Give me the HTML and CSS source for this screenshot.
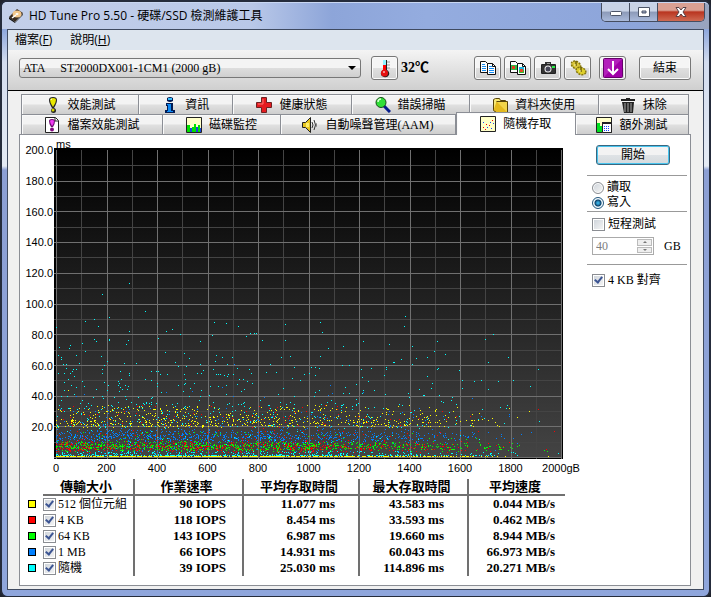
FILE: index.html
```html
<!DOCTYPE html>
<html lang="zh-Hant">
<head>
<meta charset="utf-8">
<title>HD Tune Pro 5.50</title>
<link rel="stylesheet" href="styles.css">
</head>
<body>
<div class="window">
  <header class="titlebar">
    <svg class="app-icon" width="16" height="16" viewBox="0 0 16 16"><path d="M1 9 9 1l6 4-8 9z" fill="#3a2c20"/><path d="M1 9v2l6 4v-1z" fill="#111"/><path d="M15 5v2l-8 8v-1z" fill="#555"/><ellipse cx="9" cy="6" rx="4.500" ry="3.500" fill="#f3c78b"/><ellipse cx="9" cy="6" rx="1.500" ry="1" fill="#fff"/><path d="M4 10l4-3" stroke="#fff" stroke-width="1.500"/></svg>
    <h1>HD Tune Pro 5.50 - 硬碟/SSD 檢測維護工具</h1>
    <div class="caption">
      <button aria-label="最小化"><svg width="12" height="12" viewBox="0 0 12 12"><rect x=".5" y="5.500" width="11" height="4" rx="1" fill="#fff" stroke="#4c5568"/></svg></button>
      <button aria-label="最大化"><svg width="12" height="12" viewBox="0 0 12 12"><path d="M.5 1.500h11v9H.5zM4 5v2h4V5z" fill="#fff" fill-rule="evenodd" stroke="#4c5568"/></svg></button>
      <button class="close" aria-label="關閉"><svg width="12" height="12" viewBox="0 0 12 12"><path d="M1 1.500h3l2 2.500 2-2.500h3L8 6l3 4.500H8L6 8l-2 2.500H1L4 6z" fill="#fff" stroke="#5a4044"/></svg></button>
    </div>
  </header>
  <div class="client">
    <nav class="menu"><a href="#file">檔案(<u>F</u>)</a><a href="#help">說明(<u>H</u>)</a></nav>
    <div class="toolbar">
      <div class="drive">
        <select aria-label="磁碟機"><option>ATA&nbsp;&nbsp;&nbsp;&nbsp; ST2000DX001-1CM1 (2000 gB)</option></select>
      </div>
      <button class="tool" aria-label="溫度"><svg width="20" height="20" viewBox="0 0 20 20"><path d="M8 2h4v10q3 2 2 5-2 3-5 2-4-1-3-5l2-2z" fill="#222"/><path d="M8 2h3v5H8z" fill="#8ef3ff"/><path d="M8 7h3v6H8z" fill="#f00"/><circle cx="9.500" cy="15" r="3.500" fill="#e81010"/><path d="M8 14h2" stroke="#fff"/><path d="M12 4h3M12 7h3M12 10h3" stroke="#999"/></svg></button>
      <strong class="temp">32℃</strong>
      <div class="tools">
        <button class="tool" aria-label="複製文字"><svg width="18" height="18" viewBox="0 0 18 18"><path d="M1.500 2.500h5l2 2v9h-7z" fill="#fff" stroke="#111"/><path d="M8.500 4.500h5l3 3v8h-8z" fill="#fff" stroke="#111"/><path d="M13.500 4.500v3h3" fill="none" stroke="#111"/><path d="M3 5.500h3M3 7.500h4M3 9.500h4M3 11.500h4M10 7.500h3M10 9.500h5M10 11.500h5M10 13.500h5" stroke="#168df3"/></svg></button>
        <button class="tool" aria-label="複製畫面"><svg width="18" height="18" viewBox="0 0 18 18"><path d="M1.500 2.500h5l2 2v9h-7z" fill="#fff" stroke="#111"/><path d="M2 6h6v5H2z" fill="#2cba46"/><path d="M3 7h3v3H3z" fill="#e33c22"/><path d="M8.500 4.500h5l3 3v8h-8z" fill="#fff" stroke="#111"/><path d="M13.500 4.500v3h3" fill="none" stroke="#111"/><path d="M10 8h5v6h-5z" fill="#20b8df"/><path d="M10 11h5v3h-5z" fill="#34bc34"/><path d="M11 10h3v3h-3z" fill="#e44a22"/></svg></button>
        <button class="tool" aria-label="儲存畫面"><svg width="18" height="18" viewBox="0 0 18 18"><path d="M6 3h6v3H6z" fill="#333"/><path d="M8 4h3v1H8z" fill="#999"/><rect x="2" y="5" width="15" height="10" rx="1" fill="#222"/><rect x="3" y="6" width="13" height="8" fill="#333"/><circle cx="9" cy="10" r="3.500" fill="#eee"/><circle cx="9" cy="10" r="2.500" fill="#445"/><rect x="13" y="7" width="3" height="2" fill="#2bed46"/></svg></button>
        <button class="tool" aria-label="選項"><svg width="18" height="18" viewBox="0 0 18 18"><ellipse cx="7" cy="6" rx="5" ry="3.500" transform="rotate(30 7 6)" fill="#d9c63a" stroke="#85760d" stroke-width="1.500" stroke-dasharray="2 1"/><ellipse cx="12" cy="12" rx="5" ry="3.500" transform="rotate(20 12 12)" fill="#dfd02c" stroke="#85760d" stroke-width="1.500" stroke-dasharray="2 1"/><path d="M7 2v5M12 8v5" stroke="#6f6208" stroke-width="1.500"/><path d="M5 6h2M10 12h2" stroke="#fff9aa"/></svg></button>
        <button class="tool download" aria-label="下載"><svg width="20" height="20" viewBox="0 0 20 20"><rect x=".5" y=".5" width="19" height="19" rx="1" fill="#a000a8" stroke="#65006b"/><path d="M1 1h18L1 19z" fill="#c035c8" opacity=".6"/><path d="M10 3v13M5 11l5 5 5-5" fill="none" stroke="#fff" stroke-width="2"/></svg></button>
      </div>
      <button class="tool exit">結束</button>
    </div>
    <main class="content">
      <div class="tabs upper" role="tablist">
        <button role="tab" class="w117"><svg width="16" height="16" viewBox="0 0 16 16"><path d="M4 3q0-3 4-3t4 3q0 3-3 8H7Q4 6 4 3z" fill="#222"/><path d="M5 3q0-2 3-2t3 2q0 3-3 7Q5 6 5 3z" fill="#e9e800"/><path d="M6 3q0-1 1-1" stroke="#fff" fill="none"/><circle cx="8.500" cy="13.500" r="2.500" fill="#222"/><circle cx="8" cy="13" r="1.500" fill="#d7d500"/></svg>效能測試</button>
        <button role="tab" class="w94"><svg width="16" height="16" viewBox="0 0 16 16"><path d="M5 1q3-2 6 0v3q-3 2-6 0zM4 6h7v7h2v3H3v-3h2V9H4z" fill="#001b54"/><path d="M6 1h4v2H6z" fill="#37bcfb"/><path d="M5 7h4v7h2v1H5v-1h1V8H5z" fill="#108af3"/></svg>資訊</button>
        <button role="tab" class="w118"><svg width="16" height="16" viewBox="0 0 16 16"><path d="M5.500.500h5v5h5v5h-5v5h-5v-5h-5v-5h5z" fill="#e51b20" stroke="#6e2222"/><path d="M7 2v5H2" fill="none" stroke="#ff7771"/></svg>健康狀態</button>
        <button role="tab" class="w118"><svg width="16" height="16" viewBox="0 0 16 16"><path d="m9 9 6 6" stroke="#061b8c" stroke-width="3"/><circle cx="6" cy="5.500" r="5" fill="#30df37" stroke="#164a16"/><path d="M3 5q0-3 3-3" fill="none" stroke="#d8ffd2" stroke-width="1.500"/></svg>錯誤掃瞄</button>
        <button role="tab" class="w129"><svg width="16" height="16" viewBox="0 0 16 16"><path d="M1.500 13.500v-11l2-1h4l1 2h5v2" fill="#f7e875" stroke="#554209"/><path d="M4.500 4.500h11v11h-11l-3-2" fill="#e4b91e" stroke="#554209"/><path d="m5 5 10 10V5z" fill="#f2d54a"/></svg>資料夾使用</button>
        <button role="tab" class="w90"><svg width="16" height="16" viewBox="0 0 16 16"><path d="M1 2h5V1h4v1h5v2H1z" fill="#222"/><path d="M2 5h12l-1 11H4z" fill="#222"/><path d="M5 6v9M8 6v9M11 6v9" stroke="#aaa"/></svg>抹除</button>
      </div>
      <div class="tabs lower" role="tablist">
        <button role="tab" class="w141"><svg width="16" height="16" viewBox="0 0 16 16"><path d="M1.500.500h10l3 3v12h-13z" fill="#fff" stroke="#222"/><path d="M11 1v3h3" fill="none" stroke="#222"/><path d="M5 4q0-2 3-2t3 2q0 3-2 6H7Q5 7 5 4z" fill="#6e0a70"/><path d="M6 4q0-1 2-1t2 1q0 3-2 5Q6 6 6 4z" fill="#f03bf2"/><circle cx="8" cy="12.500" r="2" fill="#82087f"/></svg>檔案效能測試</button>
        <button role="tab" class="w118"><svg width="16" height="16" viewBox="0 0 16 16"><path d="M.5.500h15v15H.5z" fill="#ffffc8" stroke="#222"/><path d="M1 8h3v7H1zM6 10h2v5H6zM8 7h2v8H8zM12 8h2v7h-2z" fill="#00e000"/><path d="M4 11h2v4H4zM10 10h2v5h-2zM14 11h1v4h-1z" fill="#1746dd"/></svg>磁碟監控</button>
        <button role="tab" class="w175"><svg width="16" height="16" viewBox="0 0 16 16"><path d="M.5 5.500h3l5-5v15l-5-5h-3z" fill="#e7c520" stroke="#222"/><path d="M4 6h3v4H4z" fill="#fff06b"/><path d="M10 5q2 3 0 6M12 3q3 5 0 10" fill="none" stroke="#333"/><path d="M14 6q1 2 0 4" fill="none" stroke="#777"/></svg>自動噪聲管理(AAM)</button>
        <button role="tab" class="w119 active" aria-selected="true"><svg width="16" height="16" viewBox="0 0 16 16"><path d="M.5.500h15v15H.5z" fill="#ffffc8" stroke="#222"/><path d="M3 11h1v1H3zM6 8h1v1H6zM9 9h1v1H9zM12 4h1v1h-1zM5 13h1v1H5z" fill="#f00"/><path d="M3 6h1v1H3zM7 11h1v1H7zM10 6h1v1h-1zM13 7h1v1h-1zM11 12h1v1h-1z" fill="#1746ff"/></svg>隨機存取</button>
        <button role="tab" class="w113"><svg width="16" height="16" viewBox="0 0 16 16"><path d="M.5.500h15v15H.5z" fill="#ffffc8" stroke="#222"/><path d="M1 6h3v9H1zM4 9h2v6H4z" fill="#00df21"/><path d="M6.500 5.500h9v10h-9z" fill="#fff" stroke="#222"/><path d="M6 5h10v2H6z" fill="#222"/><path d="M8 9.500h6M8 11.500h6M8 13.500h6" stroke="#1746ff" stroke-dasharray="1 1"/></svg>額外測試</button>
      </div>
      <section class="panel">
        <div class="upper-panel">
          <div class="chart">
            <div class="y-axis"><span>200.0</span><span>180.0</span><span>160.0</span><span>140.0</span><span>120.0</span><span>100.0</span><span>80.0</span><span>60.0</span><span>40.0</span><span>20.0</span></div>
            <div class="plot-area">
              <span class="unit">ms</span>
              <svg id="plot" viewBox="0 0 509 311" preserveAspectRatio="none" shape-rendering="crispEdges" role="img" aria-label="存取時間分佈">
                <defs><linearGradient id="shade" x2="0" y2="1"><stop offset="0" stop-color="#000"/><stop offset="1" stop-color="#444"/></linearGradient></defs>
                <rect width="509" height="311" fill="#000"/>
                <rect x="2" y="2" width="505" height="308" fill="url(#shade)"/>
              </svg>
              <div class="x-axis"><span>0</span><span>200</span><span>400</span><span>600</span><span>800</span><span>1000</span><span>1200</span><span>1400</span><span>1600</span><span>1800</span><span>2000gB</span></div>
            </div>
          </div>
          <form class="side">
            <button type="button" class="start">開始</button>
            <div class="group modes">
              <label><input type="radio" name="mode">讀取</label>
              <label><input type="radio" name="mode" checked>寫入</label>
            </div>
            <div class="group stroke">
              <label><input type="checkbox">短程測試</label>
              <div class="size"><div class="spin"><input type="text" value="40" aria-label="容量" disabled><span class="arrows"><i class="up"></i><i class="down"></i></span></div><span>GB</span></div>
            </div>
            <div class="group align">
              <label><input type="checkbox" checked>4 KB 對齊</label>
            </div>
          </form>
        </div>
        <table class="results">
          <colgroup><col class="c-key"><col class="c-size"><col class="c-iops"><col class="c-avg"><col class="c-max"><col class="c-speed"></colgroup>
          <thead><tr><td></td><th>傳輸大小</th><th>作業速率</th><th>平均存取時間</th><th>最大存取時間</th><th>平均速度</th></tr></thead>
          <tbody>
            <tr><td><i class="key yellow"></i></td><td><label><input type="checkbox" checked>512 個位元組</label></td><td>90 IOPS</td><td>11.077 ms</td><td>43.583 ms</td><td>0.044 MB/s</td></tr>
            <tr><td><i class="key red"></i></td><td><label><input type="checkbox" checked>4 KB</label></td><td>118 IOPS</td><td>8.454 ms</td><td>33.593 ms</td><td>0.462 MB/s</td></tr>
            <tr><td><i class="key green"></i></td><td><label><input type="checkbox" checked>64 KB</label></td><td>143 IOPS</td><td>6.987 ms</td><td>19.660 ms</td><td>8.944 MB/s</td></tr>
            <tr><td><i class="key blue"></i></td><td><label><input type="checkbox" checked>1 MB</label></td><td>66 IOPS</td><td>14.931 ms</td><td>60.043 ms</td><td>66.973 MB/s</td></tr>
            <tr><td><i class="key cyan"></i></td><td><label><input type="checkbox" checked>隨機</label></td><td>39 IOPS</td><td>25.030 ms</td><td>114.896 ms</td><td>20.271 MB/s</td></tr>
          </tbody>
        </table>
      </section>
    </main>
  </div>
</div>
<script src="plot.js"></script>
</body>
</html>
```
FILE: styles.css
```css
* { box-sizing: border-box; }
body {
  margin: 0;
  background: #20242e;
  font: 12px/16px "Liberation Serif", "Noto Sans CJK TC", serif;
  color: #000;
}
button, input, select { font: inherit; color: inherit; margin: 0; }
.window {
  display: flex;
  flex-direction: column;
  min-height: 100vh;
  padding: 0 5px 6px;
  border: 2px solid #252c3c;
  border-bottom-width: 1px;
  border-radius: 7px;
  background: linear-gradient(#8fa8dc 28px, #d3dcee 60px, #e4eaf4 164px, #8c9fd4 168px, #8fa6dc);
}
.titlebar {
  display: flex;
  align-items: center;
  height: 27px;
  margin: 0 -5px;
  padding: 0 4px 0 6px;
  border-radius: 5px 5px 0 0;
  border-top: 1px solid #c9d7f2;
  background: linear-gradient(90deg, #c3cfea, #b9c8e8 250px, #8da5d9 330px, #94acdf 60%, #8da5da 90%, #99a4bd);
}
.titlebar h1 {
  flex: 1;
  margin: 0 0 0 5px;
  font: 12px/20px "Open Sans", "Noto Sans CJK TC", sans-serif;
}
.caption { display: flex; align-self: flex-start; border: 1px solid #454d60; border-top: 0; border-radius: 0 0 5px 5px; overflow: hidden; }
.caption button {
  display: grid;
  place-items: center;
  width: 28px;
  height: 18px;
  padding: 0;
  border: 0;
  border-right: 1px solid #454d60;
  background: linear-gradient(#c9d3e6 45%, #8c9ab8 50%, #a9b9da);
}
.caption .close { width: 46px; border: 0; background: linear-gradient(#dba193 40%, #b93520 50%, #cf6a52); }
.client {
  flex: 1;
  display: flex;
  flex-direction: column;
  border: 1px solid #3f4a60;
  background: #f0f0f0;
}
.menu {
  display: flex;
  gap: 18px;
  height: 20px;
  padding: 0 7px;
  background: #dde5ee;
  font: 12px/20px "Open Sans", "Noto Sans CJK TC", sans-serif;
}
.menu a { color: inherit; text-decoration: none; }
.toolbar {
  display: flex;
  align-items: center;
  height: 41px;
  padding: 0 12px 4px 11px;
  border-bottom: 1px solid #000;
  background: linear-gradient(#f4f4f4, #cfcfcf);
}
.drive { position: relative; flex: 1; max-width: 342px; }
.drive select {
  display: block;
  width: 100%;
  height: 20px;
  padding: 0 3px;
  appearance: none;
  border: 1px solid #777;
  border-radius: 3px;
  background: linear-gradient(#f4f4f4 50%, #dedede 50%, #cfcfcf);
}
.drive::after { content: ""; position: absolute; right: 5px; top: 8px; border: 4px solid transparent; border-top-color: #000; border-bottom: 0; }
.tool {
  display: grid;
  place-items: center;
  width: 27px;
  height: 24px;
  padding: 0;
  border: 1px solid #777;
  border-radius: 3px;
  background: linear-gradient(#f5f5f5 50%, #e0e0e0 50%, #d2d2d2);
  box-shadow: inset 0 0 0 1px #fafafa;
}
.drive + .tool { margin-left: 10px; }
.temp { margin-left: 3px; font-size: 14px; }
.tools { display: flex; gap: 3px; margin-left: auto; }
.download { margin-left: 5px; }
.exit { width: 52px; margin-left: 13px; }
.content { flex: 1; display: flex; flex-direction: column; padding: 3px 12px 3px 11px; }
.tabs { display: flex; padding: 0 2px; }
.tabs button {
  display: flex;
  align-items: center;
  justify-content: center;
  gap: 7px;
  height: 20px;
  min-width: 0;
  padding: 0;
  border: 1px solid #8b8e95;
  border-bottom: 0;
  background: linear-gradient(#f3f3f3 45%, #dfdfdf 55%, #cecece);
  box-shadow: inset 1px 1px #fafafa;
  white-space: nowrap;
}
.tabs button + button { border-left: 0; }
.tabs .active { height: 23px; margin: -2px 0 -1px; border-left: 1px solid #8b8e95; background: #fff; z-index: 1; }
.w90 { flex: 90 1 0; }
.w94 { flex: 94 1 0; }
.w113 { flex: 113 1 0; }
.w117 { flex: 117 1 0; }
.w118 { flex: 118 1 0; }
.w119 { flex: 119 1 0; }
.w129 { flex: 129 1 0; }
.w141 { flex: 141 1 0; }
.w175 { flex: 175 1 0; }
.panel { flex: 1; border: 1px solid #8b8e95; background: #fff; }
.upper-panel { display: flex; gap: 24px; }
.chart { flex: 1; display: flex; font: 11px/12px "Liberation Sans", sans-serif; }
.y-axis { display: grid; grid-template-rows: repeat(10, 1fr); width: 34px; height: 308px; margin-top: 9px; padding-right: 1px; text-align: right; }
.plot-area { flex: 1; padding-top: 3px; }
.unit { display: block; height: 10px; padding-left: 2px; }
.plot-area svg { display: block; width: 100%; height: 311px; }
.x-axis { display: flex; justify-content: space-between; padding: 3px 2px 0; }
.x-axis span { display: flex; justify-content: center; width: 0; }
.side { width: 103px; padding-top: 10px; }
.start {
  display: block;
  width: 74px;
  height: 20px;
  margin: 0 0 10px 9px;
  padding: 0;
  border: 1px solid #39677f;
  border-radius: 3px;
  background: linear-gradient(#f3f3f3 50%, #dfe3e6 50%, #d5dadd);
  box-shadow: inset 0 0 0 1px #48c4ee;
}
.group { display: flex; flex-direction: column; margin-right: 3px; padding-left: 5px; border-top: 1px solid #999; }
.group label, .results label { display: flex; align-items: center; gap: 3px; }
.group label { line-height: 15px; }
.modes { height: 36px; padding-top: 4px; }
.stroke { height: 53px; padding-top: 5px; gap: 5px; }
.align { padding-top: 8px; }
input[type="radio"], input[type="checkbox"] {
  appearance: none;
  position: relative;
  flex: none;
  width: 13px;
  height: 13px;
  border: 1px solid #8a8d92;
  background: linear-gradient(135deg, #ccd2d9, #f7f7f7);
  box-shadow: inset 0 0 0 1px #fff;
}
input[type="radio"] { width: 12px; height: 12px; border-radius: 50%; }
input[type="radio"]:checked { border-color: #24577d; background: radial-gradient(circle, #35a9dd 1px, #0d4068 3px, #c9e4f3 4px); }
input[type="checkbox"]:checked::after {
  content: "";
  position: absolute;
  left: 3px;
  top: 0;
  width: 3px;
  height: 6px;
  border: solid #3c5593;
  border-width: 0 2px 2px 0;
  transform: rotate(38deg);
}
.size { display: flex; align-items: center; gap: 10px; }
.spin { display: flex; width: 62px; height: 18px; padding: 1px; border: 1px solid #aaa; }
.spin input { flex: 1; min-width: 0; padding: 0 2px; border: 0; background: #fff; color: #808080; }
.arrows { display: flex; flex-direction: column; gap: 1px; width: 15px; }
.arrows i { flex: 1; display: grid; place-items: center; border: 1px solid #bbb; background: #eee; }
.arrows i::before { content: ""; border: 2px solid transparent; }
.arrows .up::before { border-top: 0; border-bottom-color: #777; }
.arrows .down::before { border-bottom: 0; border-top-color: #777; }
.results { width: 545px; margin-top: 5px; border-collapse: collapse; table-layout: fixed; }
.c-key { width: 23px; }
.c-size { width: 91px; }
.c-iops { width: 109px; }
.c-avg { width: 116px; }
.c-max { width: 109px; }
.results th, .results td { padding: 0; }
.results th { height: 16px; padding-right: 4px; border-bottom: 2px solid #707070; font: bold 13px/14px "Liberation Serif", "Noto Sans CJK TC", serif; }
.results tbody td { height: 16px; line-height: 16px; }
.results th + th, .results td:nth-child(n+3) { border-left: 2px solid #707070; }
.results td:nth-child(n+3) { padding-right: 16px; text-align: right; font-size: 13px; font-weight: bold; }
.results td:nth-child(4), .results td:nth-child(5) { padding-right: 23px; }
.results td:nth-child(6) { padding-right: 10px; }
.results label { gap: 2px; white-space: nowrap; }
.key { display: block; width: 8px; height: 8px; margin-left: 8px; border: 1px solid #000; }
.yellow { background: #ff0; }
.red { background: #f00; }
.green { background: #0f0; }
.blue { background: #0080ff; }
.cyan { background: #0ff; }
```
FILE: plot.js
```js
const plot = document.getElementById("plot");

function addPath(d, fill) {
  const path = document.createElementNS("http://www.w3.org/2000/svg", "path");
  path.setAttribute("d", d);
  path.setAttribute("fill", fill);
  plot.append(path);
}

// Grid: minor lines first, major lines over them.
for (const major of [0, 1]) {
  let d = "";
  for (let i = 0; i <= 20; i++) {
    if ((i % 2 === 0) !== (major === 1)) continue;
    const x = 2 + Math.round(i * 25.25);
    const y = 2 + Math.round(i * 15.35);
    d += `M${x} 2h1v309h-1z`;
    if (i > 0) d += `M0 ${y}h507v1H0z`;
  }
  addPath(d, major ? "#707070" : "#444444");
}

// Seeded generator keeps the plot identical on each load.
let seed = 5502000;
function random() {
  seed = (seed * 1664525 + 1013904223) % 4294967296;
  return seed / 4294967296;
}

function position() {
  for (;;) {
    const x = random();
    const density = x < 0.48 ? 1 : Math.max(0.015, 1 - (x - 0.48) * 2.15);
    if (random() < density) return 2 + Math.floor(x * 504);
  }
}

function band(count, top, bottom, fill, centred) {
  let d = "";
  for (let i = 0; i < count; i++) {
    const t = centred ? (random() + random()) / 2 : random();
    d += `M${position()} ${Math.round(top + t * (bottom - top))}h1v1h-1z`;
  }
  addPath(d, fill);
}

band(430, 257, 279, "#ffff00", false);
band(190, 271, 279, "#ffff00", false);
band(230, 254, 280, "#00ffff", false);
band(70, 257, 280, "#ff0000", false);
band(90, 260, 281, "#0080ff", false);
band(800, 280, 296, "#0080ff", true);
band(45, 282, 296, "#00ffff", false);
band(50, 282, 294, "#ff0000", false);
band(60, 284, 294, "#00ff00", false);
band(620, 292, 305, "#ff0000", true);
band(800, 292, 304, "#00ff00", true);
band(100, 292, 306, "#0080ff", false);
band(230, 303, 307, "#00ffff", false);
band(240, 307, 307, "#00ffff", false);
band(650, 308, 308, "#ffff00", false);
band(60, 237, 257, "#00ffff", false);
band(10, 237, 257, "#0080ff", false);

// Slow accesses of the random-size test, as x,y pairs in plot units.
const slow = `75,135 48,146 91,163 2,179 31,173 40,171 44,178 55,169 112,183 118,181 126,186 75,183
40,191 42,193 55,191 55,192 74,192 72,196 28,195 16,197 15,200 5,199 31,203 22,207 4,207 7,209 7,211
47,208 53,213 25,215 9,216 12,216 70,215 82,215 104,190 111,204 130,205 121,214 135,210 146,193 146,216
124,218 132,218 160,174 172,175 184,178 158,187 192,188 196,185 200,185 202,185 208,192 231,176 231,192
162,207 168,209 161,213 173,216 178,209 216,216 227,209 236,208 240,219 183,220 19,221 22,221 12,220 18,223
4,225 10,225 16,225 48,221 48,225 50,217 66,223 75,225 67,231 64,233 75,227 28,233 10,234 14,231 20,228
17,237 65,235 64,237 66,239 74,238 73,241 42,241 50,234 91,231 104,223 102,223 106,226 97,223 113,226
97,232 130,226 143,225 149,222 147,225 131,231 130,236 131,235 124,237 140,235 103,235 103,238 162,226
164,226 166,226 170,227 159,221 173,228 174,226 179,226 195,221 197,225 212,224 222,224 189,231 193,233
198,235 183,236 185,231 172,237 238,230 190,241 229,240 172,246 97,250 49,250 60,249 71,248 7,248 7,252
351,168 350,178 266,174 268,184 274,200 266,208 289,198 309,193 335,196 358,198 383,193 380,203 391,206
373,209 362,210 347,211 339,214 340,214 358,216 288,217 295,217 257,219 261,219 265,220 255,225 250,226
261,227 307,221 317,220 332,219 332,221 330,227 308,229 314,233 302,236 291,239 295,245 309,242 308,245
265,242 331,246 354,245 365,241 378,235 373,228 383,221 384,220 405,222 408,232 408,240 420,233 427,232
434,241 434,214 439,186 431,191 454,209 444,233 459,232 476,238 484,221 246,232`;
addPath(slow.split(/\s+/).map((p) => `M${p}h1v1h-1z`).join(""), "#00ffff");
addPath("M180 216h1v1h-1zM112 244h1v1h-1zM30 246h1v1h-1zM22 248h1v1h-1z", "#0080ff");
addPath("M14 242h1v1h-1z", "#ffff00");
addPath("M500 283h1v1h-1zM484 261h1v1h-1z", "#ff0000");
addPath("M490 302h1v1h-1zM493 303h1v1h-1zM465 297h1v1h-1z", "#00ff00");
```
